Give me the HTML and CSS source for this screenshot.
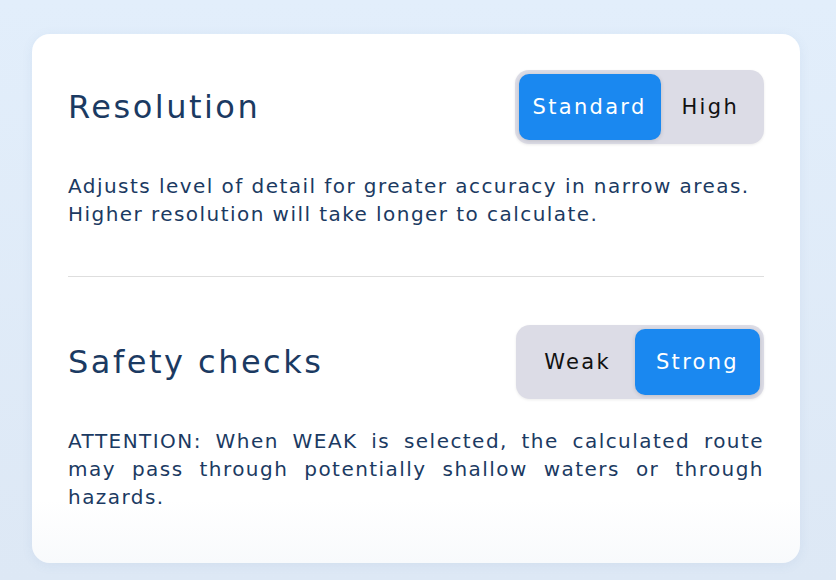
FILE: index.html
```html
<!DOCTYPE html>
<html lang="en">
<head>
    <meta charset="UTF-8">
    <meta name="viewport" content="width=device-width, initial-scale=1.0">
    <title>Route Settings</title>
    <link rel="stylesheet" href="styles.css">
</head>
<body>

    <div class="card">
        <section class="setting">
            <div class="setting-head">
                <h2>Resolution</h2>
                <div class="segmented">
                    <button class="seg active compact">Standard</button>
                    <button class="seg">High</button>
                </div>
            </div>
            <p class="note">Adjusts level of detail for greater accuracy in narrow areas.<br>Higher resolution will take longer to calculate.</p>
        </section>

        <hr class="divider">

        <section class="setting">
            <div class="setting-head">
                <h2>Safety checks</h2>
                <div class="segmented">
                    <button class="seg roomy">Weak</button>
                    <button class="seg active">Strong</button>
                </div>
            </div>
            <p class="note justify">ATTENTION: When WEAK is selected, the calculated route may pass through potentially shallow waters or through hazards.</p>
        </section>
    </div>

</body>
</html>
```

FILE: styles.css
```css
* {
    margin: 0;
    padding: 0;
    box-sizing: border-box;
}

body {
    font-family: "DejaVu Sans", sans-serif;
    background: linear-gradient(180deg, #e2eefb, #dde8f5);
    width: 836px;
    height: 580px;
    padding: 34px 36px 17px 32px;
    overflow: hidden;
}

.card {
    background: linear-gradient(180deg, #ffffff 0%, #ffffff 88%, #f8fafc 100%);
    border-radius: 18px;
    height: 529px;
    padding: 36px 36px 0 36px;
    box-shadow: 0 2px 12px rgba(80, 120, 170, 0.08);
}

.setting-head {
    display: flex;
    justify-content: space-between;
    align-items: center;
}

h2 {
    font-size: 32px;
    font-weight: normal;
    letter-spacing: 2.5px;
    color: #1b3a62;
}

.segmented {
    display: flex;
    background: #dcdce6;
    border-radius: 14px;
    padding: 4px;
    box-shadow: 0 1px 3px rgba(0, 0, 0, 0.08);
}

.seg {
    font-family: inherit;
    font-size: 21px;
    letter-spacing: 2.3px;
    height: 66px;
    padding: 0 21px;
    border: none;
    border-radius: 10px;
    background: transparent;
    color: #111;
}

.seg.compact {
    padding: 0 14px;
}

.seg.roomy {
    padding: 0 24px;
}

.seg.active {
    background: #1a88f0;
    color: #fff;
    box-shadow: 0 1px 4px rgba(0, 0, 0, 0.15);
}

.note {
    margin-top: 28px;
    font-size: 20px;
    letter-spacing: 1.45px;
    line-height: 28px;
    color: #1b3a62;
}

.note.justify {
    text-align: justify;
}

.divider {
    border: none;
    border-top: 1.5px solid #dedede;
    margin: 48px 0 48px;
}
```
